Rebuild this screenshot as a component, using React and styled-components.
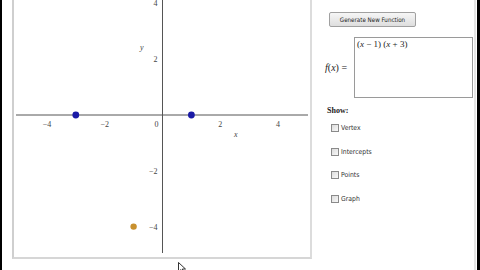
import React from "react";
import styled, { createGlobalStyle } from "styled-components";

const Global = createGlobalStyle`
  html, body {
    margin: 0;
    padding: 0;
    background: #fff;
  }
  #root {
    width: 480px;
    height: 270px;
    overflow: hidden;
  }
`;

const ORIGIN_X = 148.5;
const ORIGIN_Y = 115;
const UNIT_X = 28.9;
const UNIT_Y = 27.9;

const px = (v) => ORIGIN_X + v * UNIT_X;
const py = (v) => ORIGIN_Y - v * UNIT_Y;

const App = () => {
  const xTicks = [-4, -2, 2, 4];
  const yTicks = [4, 2, -2, -4];
  const options = ["Vertex", "Intercepts", "Points", "Graph"];

  return (
    <>
      <Global />
      <Page>
        <LeftEdge />
        <PlotArea>
          <PlotFrame>
            <svg width="296" height="257" viewBox="0 0 296 257">
              <line x1="2" y1={ORIGIN_Y} x2="294" y2={ORIGIN_Y} stroke="#555" strokeWidth="1" />
              <line x1={ORIGIN_X} y1="0" x2={ORIGIN_X} y2="253" stroke="#555" strokeWidth="1" />
              {xTicks.map((t) => (
                <text
                  key={"x" + t}
                  x={px(t)}
                  y={ORIGIN_Y + 12}
                  textAnchor="middle"
                  fontSize="8"
                  fontFamily="'Liberation Serif', serif"
                  fill="#444"
                >
                  {t < 0 ? "\u2212" + Math.abs(t) : t}
                </text>
              ))}
              <text x={ORIGIN_X - 6} y={ORIGIN_Y + 12} textAnchor="middle" fontSize="8" fontFamily="'Liberation Serif', serif" fill="#444">
                0
              </text>
              {yTicks.map((t) => (
                <text
                  key={"y" + t}
                  x={ORIGIN_X - 5}
                  y={py(t) + 3}
                  textAnchor="end"
                  fontSize="8"
                  fontFamily="'Liberation Serif', serif"
                  fill="#444"
                >
                  {t < 0 ? "\u2212" + Math.abs(t) : t}
                </text>
              ))}
              <text x="126" y="50" fontSize="8" fontStyle="italic" fontFamily="'Liberation Serif', serif" fill="#444">
                y
              </text>
              <text x="220" y="137" fontSize="8" fontStyle="italic" fontFamily="'Liberation Serif', serif" fill="#444">
                x
              </text>
              <circle cx={px(-3)} cy={py(0)} r="3.4" fill="#1a1aa6" />
              <circle cx={px(1)} cy={py(0)} r="3.4" fill="#1a1aa6" />
              <circle cx={px(-1)} cy={py(-4)} r="3.2" fill="#c8902e" />
            </svg>
          </PlotFrame>
          <Cursor viewBox="0 0 8 12" width="8" height="12">
            <path d="M0.5 0.5 L0.5 10 L3 7.6 L4.8 11.5 L6.2 10.8 L4.4 7 L7.5 7 Z" fill="#fff" stroke="#000" strokeWidth="0.8" />
          </Cursor>
        </PlotArea>
        <Panel>
          <GenerateButton>Generate New Function</GenerateButton>
          <FunctionRow>
            <FnLabel>
              <i>f</i>(<i>x</i>) =
            </FnLabel>
            <FnBox>
              (<i>x</i> − 1) (<i>x</i> + 3)
            </FnBox>
          </FunctionRow>
          <ShowTitle>Show:</ShowTitle>
          <OptionList>
            {options.map((o) => (
              <Option key={o}>
                <Check />
                <span>{o}</span>
              </Option>
            ))}
          </OptionList>
        </Panel>
        <RightEdge />
      </Page>
    </>
  );
};

export default App;

const Page = styled.div`
  display: flex;
  width: 480px;
  height: 270px;
  background: #fff;
`;

const LeftEdge = styled.div`
  width: 2px;
  background: #000;
  flex-shrink: 0;
`;

const PlotArea = styled.div`
  position: relative;
  padding-left: 10px;
  flex-shrink: 0;
`;

const PlotFrame = styled.div`
  width: 296px;
  height: 257px;
  border-left: 2px solid #cfcfcf;
  border-right: 2px solid #dcdcdc;
  border-bottom: 2px solid #d6d6d6;
  background: #fff;

  svg {
    display: block;
  }
`;

const Cursor = styled.svg`
  position: absolute;
  left: 176px;
  top: 262px;
`;

const Panel = styled.div`
  flex: 1;
  display: flex;
  flex-direction: column;
  align-items: flex-start;
  padding: 12px 0 0 13px;
  border-right: 2px solid #e4e4e4;
`;

const GenerateButton = styled.button`
  margin-left: 4px;
  width: 87px;
  height: 15px;
  padding: 0;
  border: 1px solid #a0a0a0;
  border-radius: 2px;
  background: linear-gradient(#f6f6f6, #dedede);
  font-family: "DejaVu Sans Condensed", "Liberation Sans", sans-serif;
  font-size: 6.2px;
  color: #222;
  white-space: nowrap;
`;

const FunctionRow = styled.div`
  display: flex;
  align-items: center;
  gap: 1px;
  margin-top: 10px;
`;

const FnLabel = styled.span`
  width: 28px;
  font-family: "Liberation Serif", serif;
  font-size: 10px;
  color: #222;
  white-space: nowrap;
`;

const FnBox = styled.div`
  width: 115px;
  height: 58px;
  border: 1px solid #9a9a9a;
  padding: 1px 0 0 2px;
  font-family: "Liberation Serif", serif;
  font-size: 9px;
  color: #222;
  background: #fff;
`;

const ShowTitle = styled.div`
  margin: 8px 0 0 2px;
  font-family: "Liberation Serif", serif;
  font-weight: bold;
  font-size: 8px;
  color: #222;
`;

const OptionList = styled.div`
  display: flex;
  flex-direction: column;
  gap: 13.5px;
  margin: 8px 0 0 6px;
`;

const Option = styled.label`
  display: flex;
  align-items: center;
  gap: 2px;
  height: 10px;
  font-family: "DejaVu Sans Condensed", "Liberation Sans", sans-serif;
  font-size: 6.8px;
  color: #333;
`;

const Check = styled.span`
  width: 6px;
  height: 6px;
  border: 1px solid #8a8a8a;
  background: linear-gradient(135deg, #dcdcdc, #f8f8f8);
`;

const RightEdge = styled.div`
  width: 3px;
  margin-left: 1px;
  background: #000;
  flex-shrink: 0;
`;
